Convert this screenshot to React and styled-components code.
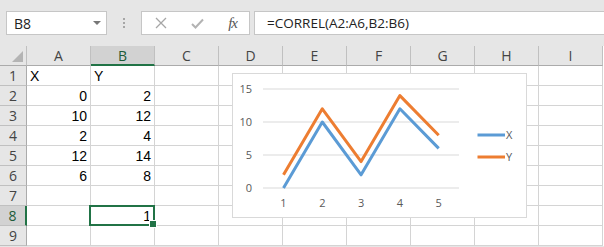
import React from "react";
import styled, { createGlobalStyle } from "styled-components";

const GREEN = "#217346";
const BLUE = "#5b9bd5";
const ORANGE = "#ed7d31";

const GlobalStyle = createGlobalStyle`
  html, body {
    margin: 0;
    padding: 0;
    background: #ffffff;
    overflow: hidden;
  }
  * {
    box-sizing: border-box;
  }
`;

const Window = styled.div`
  width: 604px;
  height: 247px;
  overflow: hidden;
  background: #e6e6e6;
  font-family: "Open Sans", "Noto Sans", sans-serif;
`;

const Toolbar = styled.div`
  display: flex;
  align-items: center;
  height: 46px;
  padding: 11px 0 11px 6px;
  gap: 4px;
`;

const NameBox = styled.div`
  position: relative;
  display: flex;
  align-items: center;
  width: 101px;
  height: 24px;
  padding-left: 7px;
  background: #ffffff;
  border: 1px solid #c6c6c6;
  font-size: 14px;
  color: #222;
`;

const DropArrow = styled.span`
  position: absolute;
  right: 5px;
  top: 9px;
  border-left: 4px solid transparent;
  border-right: 4px solid transparent;
  border-top: 4px solid #777;
`;

const Grip = styled.div`
  display: flex;
  flex-direction: column;
  gap: 2px;
  margin: 0 12px 0 12px;
`;

const Dot = styled.span`
  width: 2px;
  height: 2px;
  background: #a6a6a6;
`;

const IconBox = styled.div`
  display: flex;
  align-items: center;
  justify-content: space-between;
  width: 109px;
  height: 24px;
  padding: 0 12px 0 13px;
  background: #ffffff;
  border: 1px solid #c6c6c6;
`;

const Fx = styled.span`
  font-family: "Liberation Serif", "DejaVu Serif", serif;
  font-style: italic;
  font-size: 15px;
  color: #555;
  letter-spacing: -1px;
`;

const FormulaInput = styled.div`
  flex: 1;
  display: flex;
  align-items: center;
  height: 24px;
  padding-left: 12px;
  margin-right: -4px;
  background: #ffffff;
  border: 1px solid #c6c6c6;
  font-size: 13.5px;
  color: #222;
  white-space: nowrap;
`;

const Sheet = styled.div`
  position: relative;
  display: grid;
  grid-template-columns: 27px repeat(9, 64px);
  grid-auto-rows: 20px;
  background: #ffffff;
`;

const Corner = styled.div`
  position: relative;
  background: #e6e6e6;
  border-right: 1px solid #c0c0c0;
  border-bottom: 1px solid #ababab;
  &::after {
    content: "";
    position: absolute;
    right: 3px;
    bottom: 3px;
    border-left: 11px solid transparent;
    border-bottom: 11px solid #b4b4b4;
  }
`;

const ColHead = styled.div`
  display: flex;
  align-items: center;
  justify-content: center;
  background: ${(p) => (p.$active ? "#d2d2d2" : "#e6e6e6")};
  border-right: 1px solid #c0c0c0;
  border-bottom: ${(p) => (p.$active ? `2px solid ${GREEN}` : "1px solid #ababab")};
  font-size: 14px;
  color: ${(p) => (p.$active ? "#1d5b38" : "#444")};
`;

const RowHead = styled.div`
  display: flex;
  align-items: center;
  justify-content: center;
  background: ${(p) => (p.$active ? "#d2d2d2" : "#e6e6e6")};
  border-right: ${(p) => (p.$active ? `2px solid ${GREEN}` : "1px solid #ababab")};
  border-bottom: 1px solid #c0c0c0;
  font-size: 14px;
  color: ${(p) => (p.$active ? "#1d5b38" : "#444")};
`;

const Cell = styled.div`
  position: relative;
  display: flex;
  align-items: center;
  justify-content: ${(p) => (p.$num ? "flex-end" : "flex-start")};
  padding: 0 3px;
  border-right: 1px solid #d4d4d4;
  border-bottom: 1px solid #d4d4d4;
  font-family: "Liberation Sans", Arial, sans-serif;
  font-size: 14px;
  color: #000;
  ${(p) =>
    p.$selected &&
    `
    &::after {
      content: "";
      position: absolute;
      left: -2px;
      right: -1px;
      top: -1px;
      bottom: -1px;
      border: 2px solid ${GREEN};
    }
    &::before {
      content: "";
      position: absolute;
      right: -3px;
      bottom: -3px;
      width: 6px;
      height: 6px;
      background: ${GREEN};
      border: 1px solid #fff;
      z-index: 1;
    }
  `}
`;

const ChartBox = styled.div`
  position: absolute;
  left: 232px;
  top: 27px;
  width: 295px;
  height: 145px;
  background: #ffffff;
  border: 1px solid #d9d9d9;
`;

const ChartText = styled.text`
  font-family: "Open Sans", "Noto Sans", sans-serif;
  font-size: 11px;
  fill: #595959;
`;

const cols = ["A", "B", "C", "D", "E", "F", "G", "H", "I"];
const data = [
  ["X", "Y"],
  [0, 2],
  [10, 12],
  [2, 4],
  [12, 14],
  [6, 8],
  [],
  ["", 1],
  [],
];

const xs = [50.5, 89.3, 128.1, 166.9, 205.7];
const yOf = (v) => 114 - v * 6.6;

const Chart = () => {
  const seriesX = [0, 10, 2, 12, 6];
  const seriesY = [2, 12, 4, 14, 8];
  const pts = (s) => s.map((v, i) => `${xs[i]},${yOf(v)}`).join(" ");
  return (
    <ChartBox>
      <svg width="293" height="143" viewBox="0 0 293 143">
        {[0, 5, 10, 15].map((v) => (
          <g key={v}>
            <line x1="30" x2="226" y1={yOf(v)} y2={yOf(v)} stroke="#d9d9d9" strokeWidth="1" />
            <ChartText x="19" y={yOf(v) + 4} textAnchor="end">
              {v}
            </ChartText>
          </g>
        ))}
        {xs.map((x, i) => (
          <ChartText key={i} x={x} y="133" textAnchor="middle">
            {i + 1}
          </ChartText>
        ))}
        <polyline points={pts(seriesX)} fill="none" stroke={BLUE} strokeWidth="3" strokeLinejoin="round" />
        <polyline points={pts(seriesY)} fill="none" stroke={ORANGE} strokeWidth="3" strokeLinejoin="round" />
        <line x1="244.5" x2="272" y1="61" y2="61" stroke={BLUE} strokeWidth="3" />
        <line x1="244.5" x2="272" y1="83" y2="83" stroke={ORANGE} strokeWidth="3" />
        <ChartText x="273" y="65">X</ChartText>
        <ChartText x="273" y="87">Y</ChartText>
      </svg>
    </ChartBox>
  );
};

const App = () => (
  <Window>
    <GlobalStyle />
    <Toolbar>
      <NameBox>
        B8
        <DropArrow />
      </NameBox>
      <Grip>
        <Dot />
        <Dot />
        <Dot />
      </Grip>
      <IconBox>
        <svg width="12" height="12" viewBox="0 0 12 12">
          <path d="M1 1 L11 11 M11 1 L1 11" stroke="#a6a6a6" strokeWidth="1.3" />
        </svg>
        <svg width="13" height="11" viewBox="0 0 13 11">
          <path d="M1 6 L4.5 9.5 L12 1.5" stroke="#b3b3b3" strokeWidth="2" fill="none" />
        </svg>
        <Fx>fx</Fx>
      </IconBox>
      <FormulaInput>=CORREL(A2:A6,B2:B6)</FormulaInput>
    </Toolbar>
    <Sheet>
      <Corner />
      {cols.map((c) => (
        <ColHead key={c} $active={c === "B"}>
          {c}
        </ColHead>
      ))}
      {data.map((row, r) => (
        <React.Fragment key={r}>
          <RowHead $active={r === 7}>{r + 1}</RowHead>
          {cols.map((c, ci) => {
            const v = row[ci];
            return (
              <Cell
                key={c}
                $num={typeof v === "number"}
                $selected={r === 7 && ci === 1}
              >
                {v}
              </Cell>
            );
          })}
        </React.Fragment>
      ))}
      <Chart />
    </Sheet>
  </Window>
);

export default App;
